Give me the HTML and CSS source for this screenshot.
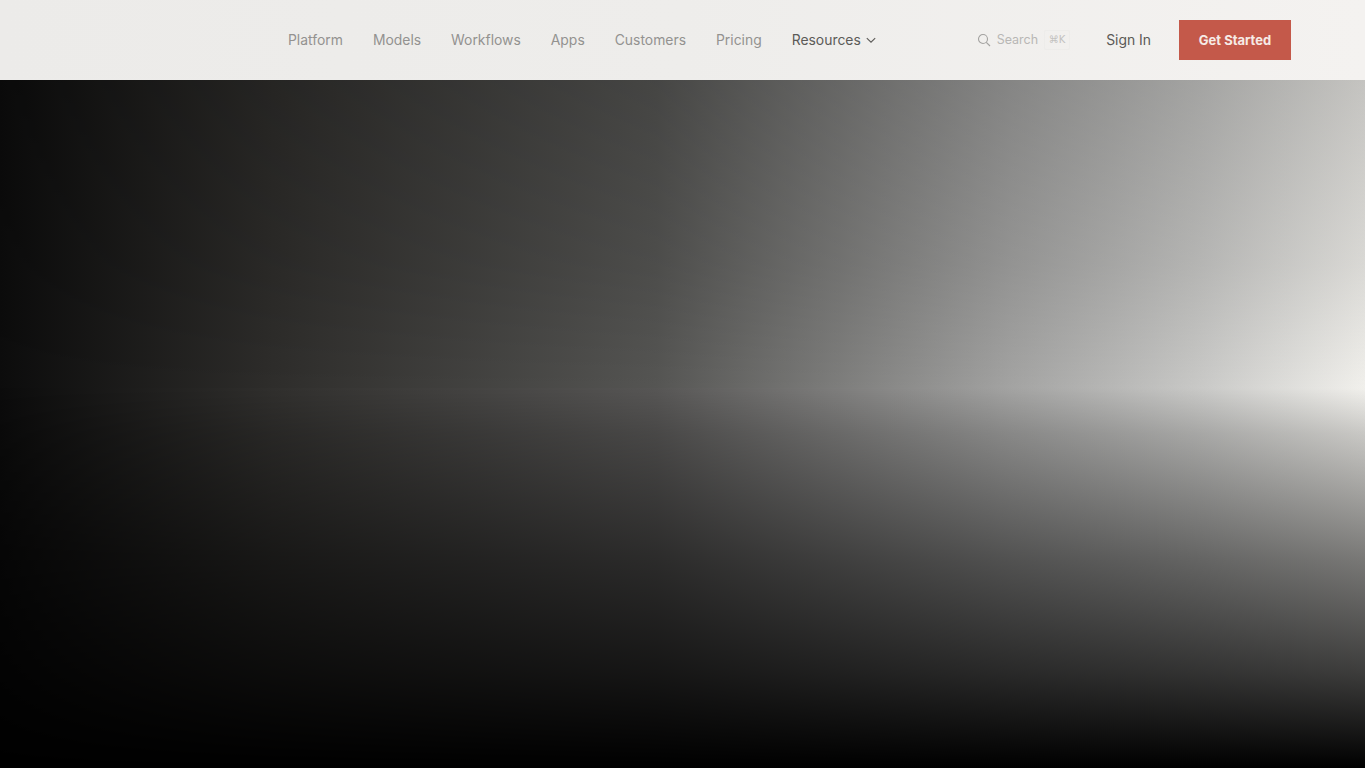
FILE: index.html
```html
<!doctype html>
<html lang="en">
  <head>
    <meta charset="UTF-8" />
    <meta name="viewport" content="width=device-width, initial-scale=1.0" />
    <title>Platform</title>
    <link rel="stylesheet" href="styles.css">
  </head>
  <body>
    <header class="topbar">
      <nav class="nav-links">
        <a href="#">Platform</a>
        <a href="#">Models</a>
        <a href="#">Workflows</a>
        <a href="#">Apps</a>
        <a href="#">Customers</a>
        <a href="#">Pricing</a>
        <a href="#" class="nav-dropdown">
          Resources
          <svg width="12" height="12" viewBox="0 0 12 12" fill="none" stroke="currentColor" stroke-width="1.1">
            <path d="M1.800 4.200L6 8.200l4.200-4" />
          </svg>
        </a>
      </nav>
      <div class="nav-actions">
        <div class="search">
          <svg width="14" height="14" viewBox="0 0 14 14" fill="none" stroke="currentColor" stroke-width="1.1">
            <circle cx="6" cy="6" r="4.500" />
            <path d="M9.300 9.300L13 13" />
          </svg>
          <span>Search</span>
          <kbd>⌘K</kbd>
        </div>
        <a href="#" class="sign-in">Sign In</a>
        <a href="#" class="get-started">Get Started</a>
      </div>
    </header>

    <main class="hero">
      <div class="hero-top"></div>
      <div class="hero-bottom"></div>
    </main>
  </body>
</html>
```

FILE: styles.css
```css
body {
  margin: 0;
  padding: 0;
  background: #000;
  font-family: "Inter", "Liberation Sans", sans-serif;
  overflow: hidden;
}

a {
  text-decoration: none;
  color: inherit;
}

/* Top navigation */
.topbar {
  height: 80px;
  display: flex;
  align-items: center;
  justify-content: space-between;
  padding: 0 74px 0 288px;
  background: linear-gradient(90deg, #ecebe9, #eeedeb 50%, #f4f2f0);
}

.nav-links {
  display: flex;
  align-items: center;
  gap: 30px;
  font-size: 13.900px;
  line-height: 20px;
  margin-top: -1px;
  color: #939290;
}

.nav-dropdown {
  display: flex;
  align-items: center;
  gap: 4px;
  color: #5c5b58;
}

.nav-actions {
  display: flex;
  align-items: center;
}

.search {
  display: flex;
  align-items: center;
  gap: 6px;
  font-size: 12.500px;
  line-height: 20px;
  margin-top: -1px;
  color: #b8b7b5;
  margin-right: 36px;
}

.search svg {
  color: #a3a2a0;
}

.search kbd {
  font-family: "DejaVu Sans", sans-serif;
  font-size: 10px;
  line-height: 18px;
  width: 24px;
  text-align: center;
  border: 1px solid #edecea;
  border-radius: 2px;
  color: #c2c1bf;
}

.sign-in {
  font-size: 13.900px;
  line-height: 20px;
  margin-top: -1px;
  color: #5a5956;
  margin-right: 28px;
}

.get-started {
  width: 112px;
  height: 40px;
  display: flex;
  align-items: center;
  justify-content: center;
  background: #c4594a;
  color: #f6ebe6;
  font-size: 13px;
  font-weight: 700;
}

/* Hero gradient, split at the bright horizon line */
.hero {
  height: 688px;
  display: flex;
  flex-direction: column;
}

.hero-top {
  height: 308px;
  background-image:
    linear-gradient(180deg, #d0d0d0 0%, #e6e6e6 60%, #ffffff 100%),
    linear-gradient(90deg, #0c0c0c 0%, #2e2d2b 20%, #555553 48%, #a3a3a2 74%, #c9c9c7 88%, #f1f0ec 100%);
  background-blend-mode: multiply;
}

.hero-bottom {
  height: 380px;
  background-image:
    linear-gradient(180deg, #ffffff 0%, #d4d4d4 12%, #808080 45%, #404040 75%, #000000 100%),
    linear-gradient(90deg, #0b0b0b 0%, #302f2d 20%, #575655 48%, #a3a3a2 74%, #c9c9c7 88%, #f1f0ec 100%);
  background-blend-mode: multiply;
}
```
